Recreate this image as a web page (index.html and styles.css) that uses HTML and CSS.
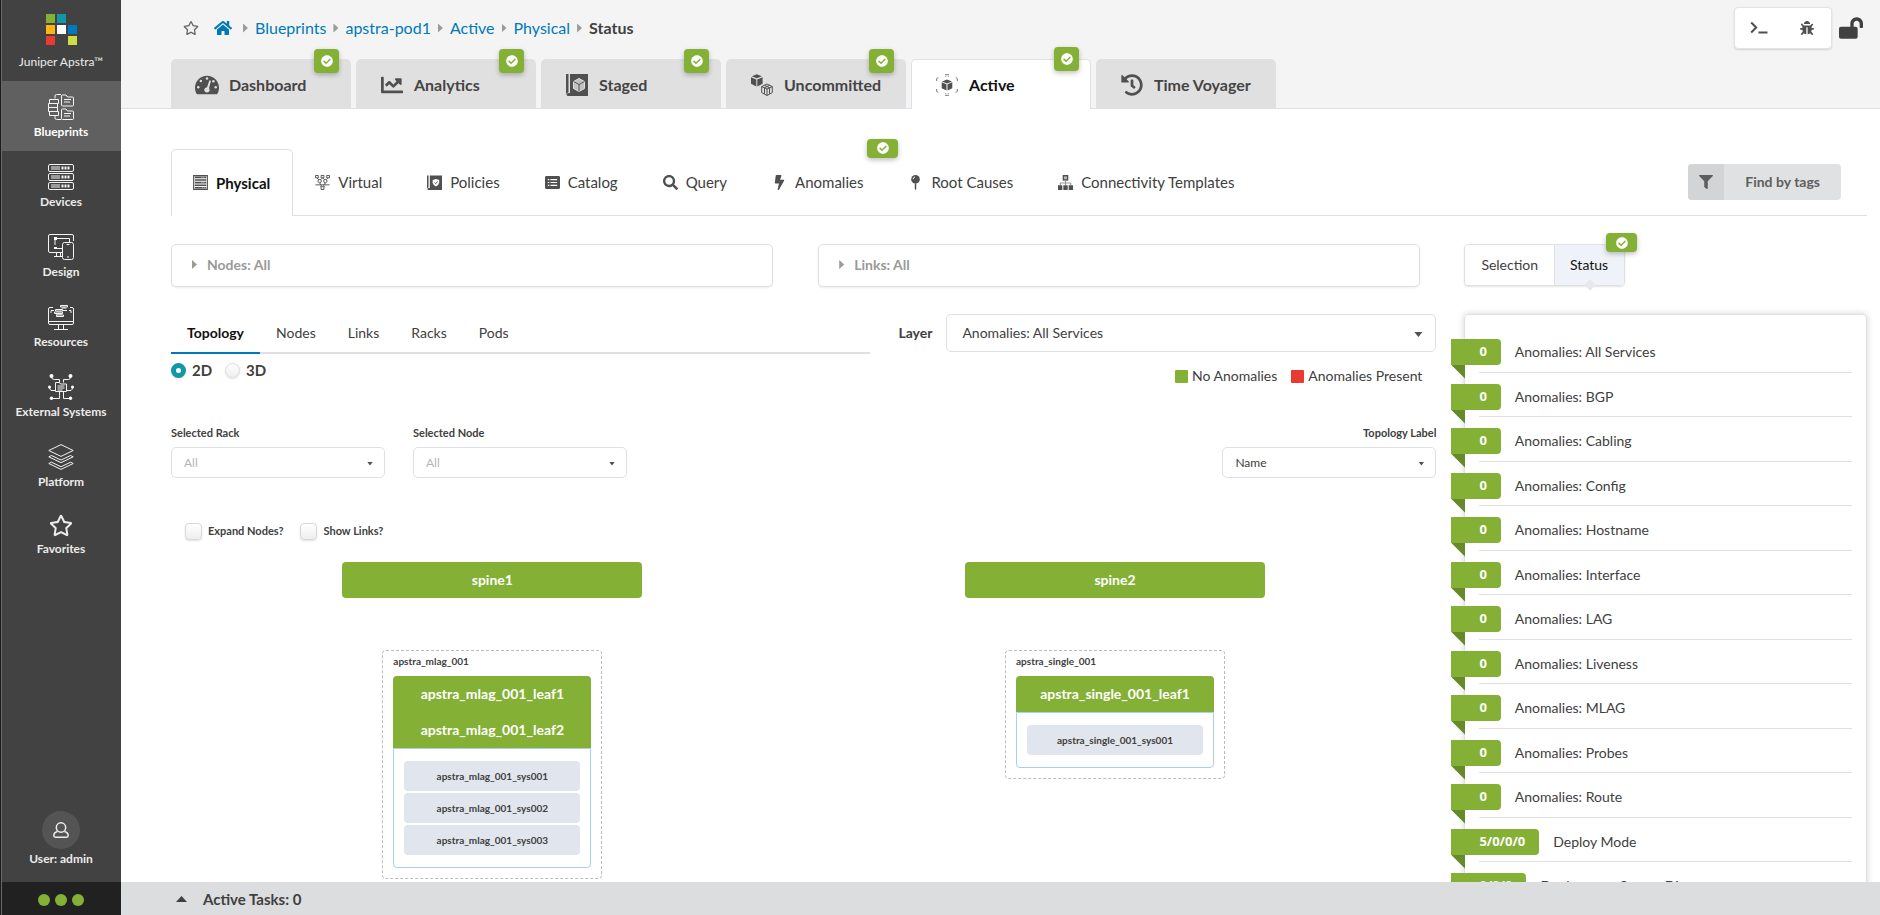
FILE: index.html
```html
<!DOCTYPE html>
<html lang="en">
<head>
<meta charset="utf-8">
<title>apstra-pod1 - Juniper Apstra</title>
<link rel="stylesheet" href="styles.css">
</head>
<body>
<svg class="sprite" aria-hidden="true">
  <symbol id="check" viewBox="0 0 512 512"><path d="M504 256c0 136.967-111.033 248-248 248S8 392.967 8 256 119.033 8 256 8s248 111.033 248 248zM227.314 387.314l184-184c6.248-6.248 6.248-16.379 0-22.627l-22.627-22.627c-6.248-6.248-16.379-6.249-22.628 0L216 308.118l-70.059-70.059c-6.248-6.248-16.379-6.248-22.628 0l-22.627 22.627c-6.248 6.248-6.248 16.379 0 22.627l104 104c6.249 6.249 16.379 6.249 22.628.001z"/></symbol>
  <symbol id="star" viewBox="0 0 576 512"><path d="M528.1 171.5L382 150.2 316.7 17.8c-11.7-23.6-45.6-23.9-57.4 0L194 150.2 47.9 171.5c-26.2 3.8-36.7 36.1-17.7 54.6l105.7 103-25 145.5c-4.5 26.3 23.2 46 46.4 33.7L288 439.6l130.7 68.7c23.2 12.2 50.9-7.4 46.4-33.7l-25-145.5 105.7-103c19-18.5 8.5-50.8-17.7-54.6zM388.6 312.3l23.7 138.4L288 385.4l-124.3 65.3 23.7-138.4-100.6-98 139-20.2 62.2-126 62.2 126 139 20.2-100.6 98z"/></symbol>
</svg>
<div class="app">
  <aside class="sidebar">
    <a class="brand" href="#">
      <svg class="logo" viewBox="0 0 31 31" aria-hidden="true"><path fill="#84b135" d="M0 0h9v9H0z"/><path fill="#1197a5" d="M11 0h9v9h-9z"/><path fill="#fdb515" d="M0 11h9v9H0z"/><path fill="#fff" d="M11 11h9v9h-9z"/><path fill="#0079c1" d="M22 11h9v9h-9z"/><path fill="#e73c2f" d="M0 22h9v9H0z"/><path fill="#cfdd45" d="M22 22h9v9h-9z"/></svg>
      <span>Juniper Apstra™</span>
    </a>
    <nav class="side-nav">
      <a class="side-item is-active" href="#">
        <svg class="side-icon" viewBox="0 0 26 26"><path d="M7 4.500V2q0-1.500 1.500-1.500H13M7 21.500V24q0 1.500 1.500 1.500H13M13.500 11V2q0-1 1-1H18l1.500 2H24.500q1 0 1 1v7q0 1-1 1h-10q-1 0-1-1zM13.500 24.500V16q0-1 1-1H18l1.500 2H24.500q1 0 1 1v6.500q0 1-1 1h-10q-1 0-1-1zM1.500 5.500h9v4h-9zM.5 9.500h9v4h-9zM.5 13.500h9v4h-9zM1.500 17.500h9v4h-9zM16 5.500h7M16 8h6M16 19.500h7M16 22h6"/></svg>
        <span>Blueprints</span></a>
      <a class="side-item" href="#">
        <svg class="side-icon" viewBox="0 0 26 26"><path d="M2 .5h22q1.500 0 1.500 1.500v4q0 1.500-1.500 1.500H2Q.5 7.500.5 6V2Q.5.5 2 .5zM2 9.500h22q1.500 0 1.500 1.500v4q0 1.500-1.500 1.500H2Q.5 16.500.5 15v-4Q.5 9.500 2 9.500zM2 18.500h22q1.500 0 1.500 1.500v4q0 1.500-1.500 1.500H2Q.5 25.500.5 24v-4q0-1.500 1.500-1.500zM3 3h9M3 5h9M3 12h9M3 14h9M3 21h9M3 23h9"/><path stroke-dasharray="2 1" d="M13.500 4h9M13.500 13h9M13.500 22h9" stroke-width="3"/></svg>
        <span>Devices</span></a>
      <a class="side-item" href="#">
        <svg class="side-icon" viewBox="0 0 26 26"><path d="M14 18.500H2Q.5 18.500.5 17V2Q.5.5 2 .5h22q1.500 0 1.500 1.500v5M8.500 18.500V22M12.500 18.500V22M6 22.500h8M7 4v7M9 4.500h12.500V8M6 14.500h8"/><path d="M6 3h3v3H6zM6 13h3v2H6z" fill="#fff" stroke="none"/><rect x="14.500" y="8.500" width="11" height="17" rx="2"/><path d="M18.500 10.500h3M19 23h2"/></svg>
        <span>Design</span></a>
      <a class="side-item" href="#">
        <svg class="side-icon" viewBox="0 0 26 26"><path d="M5 3.500H2Q.5 3.500.5 5v14q0 1.500 1.500 1.500h22q1.500 0 1.500-1.500V5q0-1.500-1.500-1.500h-2M1 17.500h24M10.500 21v4M15.500 21v4M6 25.500h14M3 9V6.500h3M23 9V6.500h-2"/><path d="M7.500 5.500h7v1.500h-7zM6.500 8h8v1.500h-8zM8.500 11h7v1.500h-7zM12.500 1.500h7v1.500h-7zM13.500 4h5M15 6.500h4M8 10h6"/></svg>
        <span>Resources</span></a>
      <a class="side-item" href="#">
        <svg class="side-icon" viewBox="0 0 26 26"><path d="M7.500 17.500v-9h4l1 1.500h6v7.500zM9.500 12h7M9.500 14h7M9.500 16h5M11.500 8.500V5.500h-5Q3.500 5.500 3.500 3M15.500 8.500V5.500h5q2 0 2-2.500M7 16.500H3Q1.500 15 1.500 13.500M19 16.500h4q1.500-1 1.500-3M11.500 18v3.500h-0v3H4.500M15.500 18v6.500h6"/><g fill="#fff" stroke="none"><circle cx="3.500" cy="2" r="2"/><circle cx="22.500" cy="2" r="2"/><circle cx="1.500" cy="13" r="1.500"/><circle cx="24.500" cy="13" r="1.500"/><circle cx="3.500" cy="24.300" r="1.700"/><circle cx="22.500" cy="24.300" r="1.700"/></g></svg>
        <span>External Systems</span></a>
      <a class="side-item" href="#">
        <svg class="side-icon" viewBox="0 0 26 26"><path d="M.8 6.500L13 .6l12.200 5.900L13 12.400zM3.500 11.500L.8 12.800 13 18.700l12.200-5.900-2.700-1.300-9.500 4.600zM3.500 18.200L.8 19.500 13 25.400l12.200-5.900-2.700-1.300-9.500 4.600z"/></svg>
        <span>Platform</span></a>
      <a class="side-item" href="#">
        <svg class="side-star"><use href="#star"/></svg>
        <span>Favorites</span></a>
    </nav>
    <a class="user" href="#">
      <span class="avatar"><svg class="avatar-icon" viewBox="0 0 16 16"><circle cx="8" cy="5.500" r="4.700"/><path d="M4.500 9.500Q.8 10.500.8 13.500q0 1.700 1.700 1.700h11q1.700 0 1.700-1.700 0-3-3.700-4"/></svg></span>
      <span>User: admin</span>
    </a>
    <div class="health"><i></i><i></i><i></i></div>
  </aside>

  <main class="main">
    <header class="header">
      <div class="crumb-row">
        <nav class="crumbs" aria-label="Breadcrumb">
          <button class="icon-button fav" aria-label="Add to favorites"><svg class="crumb-star"><use href="#star"/></svg></button>
          <a href="#" aria-label="Home"><svg class="home" viewBox="0 0 576 512"><path d="M280.37 148.26L96 300.11V464a16 16 0 0 0 16 16l112.060-.29a16 16 0 0 0 15.920-16V368a16 16 0 0 1 16-16h64a16 16 0 0 1 16 16v95.640a16 16 0 0 0 16 16.050L464 480a16 16 0 0 0 16-16V300L295.67 148.26a12.190 12.190 0 0 0-15.300 0zM571.600 251.470L488 182.560V44.050a12 12 0 0 0-12-12h-56a12 12 0 0 0-12 12v72.610L318.470 43a48 48 0 0 0-61 0L4.340 251.470a12 12 0 0 0-1.600 16.900l25.500 31A12 12 0 0 0 45.150 301l235.220-193.740a12.190 12.190 0 0 1 15.300 0L530.900 301a12 12 0 0 0 16.900-1.600l25.500-31a12 12 0 0 0-1.700-16.930z"/></svg></a>
          <i class="caret-right"></i><a href="#">Blueprints</a>
          <i class="caret-right"></i><a href="#">apstra-pod1</a>
          <i class="caret-right"></i><a href="#">Active</a>
          <i class="caret-right"></i><a href="#">Physical</a>
          <i class="caret-right"></i><strong>Status</strong>
        </nav>
        <div class="tools">
          <div class="tool-group">
            <button class="icon-button tool" aria-label="Terminal"><svg class="term" viewBox="0 0 18 14"><path d="M1.200 1.500L6.200 6.500l-5 5M8.500 11.500h9" fill="none" stroke="currentColor" stroke-width="2"/></svg></button>
            <button class="icon-button tool" aria-label="Report a bug"><svg class="bug" viewBox="0 0 512 512"><path d="M511.988 288.900c-.478 17.430-15.217 31.100-32.653 31.100H424v16c0 21.864-4.882 42.584-13.600 61.145l60.228 60.228c12.496 12.497 12.496 32.758 0 45.255-12.498 12.497-32.759 12.496-45.256 0l-54.736-54.736C345.886 467.965 314.351 480 280 480V236c0-6.627-5.373-12-12-12h-24c-6.627 0-12 5.373-12 12v244c-34.351 0-65.886-12.035-90.636-32.108l-54.736 54.736c-12.498 12.497-32.759 12.496-45.256 0-12.496-12.497-12.496-32.758 0-45.255l60.228-60.228C92.882 378.584 88 357.864 88 336v-16H32.666C15.230 320 .491 306.330.013 288.900-.484 270.816 14.028 256 32 256h56v-58.745l-46.628-46.628c-12.496-12.497-12.496-32.758 0-45.255 12.498-12.497 32.758-12.497 45.256 0L141.255 160h229.489l54.627-54.627c12.498-12.497 32.758-12.497 45.256 0 12.496 12.497 12.496 32.758 0 45.255L424 197.255V256h56c17.972 0 32.484 14.816 31.988 32.900zM257 0c-61.856 0-112 50.144-112 112h224C369 50.144 318.856 0 257 0z"/></svg></button>
          </div>
          <button class="icon-button" aria-label="Blueprint unlocked"><svg class="lock" viewBox="0 0 576 512"><path d="M423.500 0C339.500.3 272 69.500 272 153.500V224H48c-26.500 0-48 21.500-48 48v192c0 26.500 21.500 48 48 48h352c26.500 0 48-21.500 48-48V272c0-26.500-21.500-48-48-48h-48v-71.100c0-39.600 31.700-72.500 71.300-72.900 40-.4 72.700 32.100 72.700 72v80c0 13.300 10.700 24 24 24h32c13.300 0 24-10.700 24-24v-80C576 68 507.500-.3 423.500 0z"/></svg></button>
        </div>
      </div>
      <nav class="tabs">
        <a class="tab" href="#"><svg class="tab-icon" viewBox="0 0 576 512"><path d="M288 32C128.940 32 0 160.940 0 320c0 52.800 14.250 102.260 39.060 144.800 5.610 9.620 16.300 15.200 27.440 15.200h443c11.140 0 21.830-5.580 27.440-15.200C561.750 422.260 576 372.800 576 320c0-159.060-128.940-288-288-288z"/><g fill="#e0e0e0"><circle cx="288" cy="100" r="30"/><circle cx="140" cy="160" r="30"/><circle cx="78" cy="310" r="30"/><circle cx="498" cy="310" r="30"/><circle cx="440" cy="165" r="30"/><path d="M345 140l38 12-46 180q14 20 14 40-2 66-64 66t-64-66q2-58 66-64z"/></g></svg>Dashboard<span class="badge"><svg class="badge-icon"><use href="#check"/></svg></span></a>
        <a class="tab" href="#"><svg class="tab-icon small" viewBox="0 0 512 512"><path d="M496 384H64V80c0-8.840-7.160-16-16-16H16C7.160 64 0 71.160 0 80v336c0 17.670 14.330 32 32 32h464c8.840 0 16-7.160 16-16v-32c0-8.840-7.160-16-16-16zM464 96H345.940c-21.380 0-32.090 25.850-16.970 40.970l32.400 32.400L288 242.750l-73.370-73.370c-12.500-12.500-32.760-12.500-45.250 0l-68.690 68.690c-6.250 6.250-6.250 16.380 0 22.630l22.620 22.620c6.250 6.250 16.380 6.250 22.630 0L192 237.250l73.370 73.370c12.500 12.500 32.760 12.500 45.250 0l96-96 32.400 32.400c15.120 15.120 40.970 4.410 40.970-16.970V112c.01-8.840-7.150-16-15.990-16z"/></svg>Analytics<span class="badge"><svg class="badge-icon"><use href="#check"/></svg></span></a>
        <a class="tab" href="#"><svg class="tab-icon small" viewBox="0 0 22 22"><path d="M0 0h2.500v18.500Q1 18.500 0 20zM4 0h18v22H2.500Q.5 22 .5 20.500T2.500 19H4z"/><g fill="none" stroke="#e0e0e0"><path d="M7.500 7.500L13 4.500l5.500 3v7L13 17.500l-5.500-3z" fill="#fff" fill-opacity=".65"/><path d="M7.500 7.500l5.500 3 5.500-3M13 10.500v7" stroke="#555"/></g></svg>Staged<span class="badge"><svg class="badge-icon"><use href="#check"/></svg></span></a>
        <a class="tab" href="#"><svg class="tab-icon small" viewBox="0 0 22 22"><path d="M5.800.2l5 2-5 2-5-2zM0 3.200l5.300 2.200v7L0 9.800zM11.600 3.200L6.300 5.400v7l5.300-2.600z"/><path d="M16 10l5.300 2.600v6L16 21.500l-5.300-2.900v-6zM10.700 12.600L16 15l5.300-2.400M16 15v6.500M13.500 11.300l5 2.500v6M18.500 11.300l-5 2.500v6" fill="none" stroke="currentColor" stroke-width="1"/></svg>Uncommitted<span class="badge"><svg class="badge-icon"><use href="#check"/></svg></span></a>
        <a class="tab is-active" href="#"><svg class="tab-icon small" viewBox="0 0 22 22"><path d="M11 5.500l5 1.900-5 2-5-2zM5.700 8.300l4.800 1.900v6.300l-4.800-2.300zM16.300 8.300l-4.800 1.900v6.300l4.800-2.300z"/><path d="M9 .7h4M9.700 2v.8M12.300 2v.8M.7 7V4.500l1.600-1M21.300 7V4.500l-1.600-1M.7 15v2.500l1.600 1M21.300 15v2.500l-1.600 1M9 21.300h4M9.700 20v-.8M12.300 20v-.8" fill="none" stroke="#777" stroke-width="1"/></svg>Active<span class="badge"><svg class="badge-icon"><use href="#check"/></svg></span></a>
        <a class="tab" href="#"><svg class="tab-icon small" viewBox="0 0 512 512"><path d="M504 255.531c.253 136.640-111.180 248.372-247.820 248.468-59.015.042-113.223-20.530-155.822-54.911-11.077-8.940-11.905-25.541-1.839-35.607l11.267-11.267c8.609-8.609 22.353-9.551 31.891-1.984C173.062 425.135 212.781 440 256 440c101.705 0 184-82.311 184-184 0-101.705-82.311-184-184-184-48.814 0-93.149 18.969-126.068 49.932l50.754 50.754c10.080 10.080 2.941 27.314-11.313 27.314H24c-8.837 0-16-7.163-16-16V38.627c0-14.254 17.234-21.393 27.314-11.314l49.372 49.372C129.209 34.136 189.552 8 256 8c136.810 0 247.747 110.780 248 247.531zm-180.912 78.784l9.823-12.630c8.138-10.463 6.253-25.542-4.210-33.679L288 256.349V152c0-13.255-10.745-24-24-24h-16c-13.255 0-24 10.745-24 24v135.651l65.409 50.874c10.463 8.137 25.541 6.253 33.679-4.210z"/></svg>Time Voyager</a>
      </nav>
    </header>

    <div class="content">
      <div class="subnav">
        <nav class="subtabs">
          <a class="subtab is-active" href="#"><svg class="sub-icon" viewBox="0 0 16 16"><path d="M.7.7h14.600v14.600H.7z" fill="none" stroke="currentColor" stroke-width="1.200"/><path d="M2 2.500h12M2 5.300h12M2 8.100h12M2 10.900h12M2 13.600h12" stroke="currentColor" stroke-width="1.700"/><path d="M9 2.500h4M9 8.100h4M10 13.600h3" stroke="#fff" stroke-width=".7" stroke-dasharray="1 1"/></svg>Physical</a>
          <a class="subtab" href="#"><svg class="sub-icon" viewBox="0 0 16 16"><g fill="none" stroke="currentColor"><path d="M.5 3V.5h3V3zM6.500 3V.5h3V3zM12.500 3V.5h3V3z"/><circle cx="5" cy="6.500" r="1.800"/><circle cx="11" cy="6.500" r="1.800"/><path d="M2 3l2 2M8 3L6 5M8 3l2 2M14 3l-2 2M.5 10.500h15M5 8.500l2 3M11 8.500l-2 3M5.500 12.500h5M6.500 13v2.500h3V13"/></g></svg>Virtual</a>
          <a class="subtab" href="#"><svg class="sub-icon" viewBox="0 0 16 16"><path d="M0 .5h1.600v12.700q-1 0-1.600.8zM3 .5h13v15.500H1.800Q.3 16 .3 15t1.500-1.200H3z"/><path fill="#fff" d="M9.500 4.300l3.500 1v3q-.5 2.700-3.500 4Q6.500 11 6 8.300v-3z"/><path d="M8 8l1.200 1.200L11.500 7" fill="none" stroke="currentColor" stroke-width="1"/></svg>Policies</a>
          <a class="subtab" href="#"><svg class="sub-icon" viewBox="0 0 16 16"><path d="M1.500 1h13q1.500 0 1.500 1.500v11q0 1.500-1.500 1.500h-13Q0 15 0 13.500v-11Q0 1 1.500 1z"/><path stroke="#fff" stroke-width="1.300" d="M3 5h1.600M3 8h1.600M3 11h1.600M5.800 5H13M5.800 8H13M5.800 11H13"/></svg>Catalog</a>
          <a class="subtab" href="#"><svg class="sub-icon" viewBox="0 0 512 512"><path d="M505 442.700L405.300 343c-4.500-4.500-10.600-7-17-7H372c27.600-35.300 44-79.700 44-128C416 93.100 322.900 0 208 0S0 93.100 0 208s93.100 208 208 208c48.300 0 92.700-16.400 128-44v16.300c0 6.400 2.500 12.500 7 17l99.700 99.700c9.400 9.400 24.600 9.400 33.900 0l28.300-28.300c9.400-9.400 9.400-24.600.1-34zM208 336c-70.700 0-128-57.200-128-128 0-70.700 57.200-128 128-128 70.700 0 128 57.200 128 128 0 70.700-57.200 128-128 128z"/></svg>Query</a>
          <a class="subtab" href="#"><svg class="sub-icon" viewBox="0 0 320 512"><path d="M296 160H180.600l42.600-129.800C227.200 15 215.700 0 200 0H56C44 0 33.800 8.900 32.200 20.800l-32 240C-1.700 275.200 9.500 288 24 288h118.700L96.600 482.500c-3.600 15.200 8 29.500 23.300 29.500 8.400 0 16.400-4.400 20.800-12l176-304c9.300-15.900-2.200-36-20.700-36z"/></svg>Anomalies<span class="badge badge-wide"><svg class="badge-icon"><use href="#check"/></svg></span></a>
          <a class="subtab" href="#"><svg class="sub-icon" viewBox="0 0 16 16"><circle cx="8" cy="4.600" r="4.600"/><path d="M7.200 9h1.600v6L8 16l-.8-1z"/><path d="M5.500 4.500Q5.500 2.500 7.500 2" fill="none" stroke="#fff" stroke-width="1"/></svg>Root Causes</a>
          <a class="subtab" href="#"><svg class="sub-icon" viewBox="0 0 16 16"><path d="M5 0h6v6H5z"/><path fill="#bbb" d="M6.500 1.500h3v3h-3z"/><path d="M2.500 11V8.500h11V11M8 6v5" fill="none" stroke="#999" stroke-width="1.200"/><path d="M0 11h4.600v5H0zM5.700 11h4.600v5H5.700zM11.400 11H16v5h-4.600z"/></svg>Connectivity Templates</a>
        </nav>
        <button class="find"><span class="find-icon"><svg class="filter" viewBox="0 0 512 512"><path d="M487.976 0H24.028C2.710 0-8.047 25.866 7.058 40.971L192 225.941V432c0 7.831 3.821 15.170 10.237 19.662l80 55.980C298.020 518.690 320 507.493 320 487.980V225.941l184.947-184.970C520.021 25.896 509.338 0 487.976 0z"/></svg></span><span class="find-text">Find by tags</span></button>
      </div>

      <div class="columns">
        <section class="left">
          <div class="accordions">
            <button class="accordion"><i class="caret-right"></i>Nodes: All</button>
            <button class="accordion"><i class="caret-right"></i>Links: All</button>
          </div>
          <div class="view">
            <div>
              <nav class="view-tabs">
                <a class="view-tab is-active" href="#">Topology</a>
                <a class="view-tab" href="#">Nodes</a>
                <a class="view-tab" href="#">Links</a>
                <a class="view-tab" href="#">Racks</a>
                <a class="view-tab" href="#">Pods</a>
              </nav>
              <div class="radios">
                <label class="radio"><input type="radio" name="dimension" checked>2D</label>
                <label class="radio"><input type="radio" name="dimension">3D</label>
              </div>
            </div>
            <div>
              <div class="layer">
                <label for="layer">Layer</label>
                <span class="dropdown large"><select id="layer"><option>Anomalies: All Services</option></select></span>
              </div>
              <div class="legend">
                <span class="key"><i class="swatch ok"></i>No Anomalies</span>
                <span class="key"><i class="swatch bad"></i>Anomalies Present</span>
              </div>
            </div>
          </div>
          <div class="filters">
            <div class="field"><label for="rack">Selected Rack</label><span class="dropdown muted"><select id="rack"><option>All</option></select></span></div>
            <div class="field"><label for="node">Selected Node</label><span class="dropdown muted"><select id="node"><option>All</option></select></span></div>
            <div class="field field-end"><label for="topo-label">Topology Label</label><span class="dropdown"><select id="topo-label"><option>Name</option></select></span></div>
          </div>
          <div class="checks">
            <label class="check"><input type="checkbox">Expand Nodes?</label>
            <label class="check"><input type="checkbox">Show Links?</label>
          </div>
          <div class="topology">
            <div class="pod">
              <div class="spine">spine1</div>
              <div class="rack">
                <div class="rack-name">apstra_mlag_001</div>
                <div class="leaves"><div class="leaf">apstra_mlag_001_leaf1</div><div class="leaf">apstra_mlag_001_leaf2</div></div>
                <div class="systems"><div class="system">apstra_mlag_001_sys001</div><div class="system">apstra_mlag_001_sys002</div><div class="system">apstra_mlag_001_sys003</div></div>
              </div>
            </div>
            <div class="pod">
              <div class="spine">spine2</div>
              <div class="rack">
                <div class="rack-name">apstra_single_001</div>
                <div class="leaves"><div class="leaf">apstra_single_001_leaf1</div></div>
                <div class="systems"><div class="system">apstra_single_001_sys001</div></div>
              </div>
            </div>
          </div>
        </section>
        <aside class="right">
          <div class="switch">
            <button class="switch-item">Selection</button>
            <button class="switch-item is-active">Status<span class="badge badge-wide"><svg class="badge-icon"><use href="#check"/></svg></span></button>
          </div>
          <div class="panel">
            <a class="status" href="#"><span class="ribbon">0</span>Anomalies: All Services</a>
            <a class="status" href="#"><span class="ribbon">0</span>Anomalies: BGP</a>
            <a class="status" href="#"><span class="ribbon">0</span>Anomalies: Cabling</a>
            <a class="status" href="#"><span class="ribbon">0</span>Anomalies: Config</a>
            <a class="status" href="#"><span class="ribbon">0</span>Anomalies: Hostname</a>
            <a class="status" href="#"><span class="ribbon">0</span>Anomalies: Interface</a>
            <a class="status" href="#"><span class="ribbon">0</span>Anomalies: LAG</a>
            <a class="status" href="#"><span class="ribbon">0</span>Anomalies: Liveness</a>
            <a class="status" href="#"><span class="ribbon">0</span>Anomalies: MLAG</a>
            <a class="status" href="#"><span class="ribbon">0</span>Anomalies: Probes</a>
            <a class="status" href="#"><span class="ribbon">0</span>Anomalies: Route</a>
            <a class="status" href="#"><span class="ribbon">5/0/0/0</span>Deploy Mode</a>
            <a class="status" href="#"><span class="ribbon">0/0/0</span>Deployment Status: Discovery</a>
          </div>
        </aside>
      </div>
    </div>

    <footer class="tasks"><button class="tasks-toggle"><i class="caret-up"></i>Active Tasks: 0</button></footer>
  </main>
</div>
</body>
</html>
```
FILE: styles.css
```css
* { box-sizing: border-box; }
body {
  margin: 0;
  background: #fff;
  color: #404040;
  font: 15px/20px Lato, "Liberation Sans", sans-serif;
}
a { color: inherit; text-decoration: none; }
button, select, input { font: inherit; color: inherit; margin: 0; }
button { border: 0; background: none; padding: 0; cursor: pointer; }
svg { display: block; fill: currentColor; flex: none; }
.sprite { position: absolute; width: 0; height: 0; }

.app { display: flex; height: 100vh; overflow: hidden; }

/* Sidebar */
.sidebar {
  flex: none;
  width: 121px;
  display: flex;
  flex-direction: column;
  background: #424242;
  border-left: 1px solid #1b1b1b;
  box-shadow: inset 1px 0 #6a6a6a;
  color: #ececec;
  font-size: 12px;
  line-height: 16px;
  font-weight: 700;
  text-align: center;
}
.brand {
  display: flex;
  flex-direction: column;
  align-items: center;
  gap: 9px;
  height: 81px;
  padding-top: 14px;
  font-weight: 400;
}
.logo { width: 31px; height: 31px; }
.side-item {
  display: flex;
  flex-direction: column;
  align-items: center;
  gap: 4px;
  height: 70px;
  margin-left: 1px;
  padding: 13px 1px 0 0;
}
.side-item.is-active { background: #606060; color: #fff; }
.side-icon {
  width: 26px;
  height: 26px;
  fill: none;
  stroke: #f4f4f4;
  stroke-width: 1;
}
.side-star { width: 24px; height: 23px; }
.user {
  display: flex;
  flex-direction: column;
  align-items: center;
  gap: 2px;
  margin-top: auto;
  padding-bottom: 15px;
}
.avatar {
  display: grid;
  place-items: center;
  width: 38px;
  height: 38px;
  border-radius: 50%;
  background: #545454;
}
.avatar-icon { width: 16px; height: 16px; fill: none; stroke: #ececec; stroke-width: 1.5; }
.health {
  display: flex;
  align-items: center;
  justify-content: center;
  gap: 5px;
  height: 33px;
  padding: 3px 1px 0 0;
  margin-left: 1px;
  background: #212121;
}
.health i { width: 12px; height: 12px; border-radius: 50%; background: #84b135; }

/* Header */
.main { flex: 1; min-width: 0; display: flex; flex-direction: column; }
.header { flex: none; background: #f4f4f4; border-bottom: 1px solid #dee0e6; padding-left: 50px; }
.crumb-row { display: flex; justify-content: space-between; height: 59px; padding: 0 17px 0 12px; }
.crumbs { display: flex; align-items: center; gap: 7px; height: 56px; font-size: 16px; }
.crumbs a { color: #0079b9; }
.fav { color: #666; }
.crumb-star { width: 16px; height: 14px; }
.home { width: 18px; height: 16px; margin: 0 4px 0 8px; }
.caret-right {
  width: 5px;
  height: 9px;
  background: #9b9b9b;
  clip-path: polygon(0 0, 100% 50%, 0 100%);
}
.tools { display: flex; gap: 7px; align-items: flex-start; padding-top: 7px; }
.tool-group {
  display: flex;
  height: 42px;
  background: #fff;
  border: 1px solid #e0e3e8;
  border-radius: 4px;
  box-shadow: 0 1px 2px rgba(34, 36, 38, .15);
}
.tool { width: 48px; display: grid; place-items: center; color: #505050; }
.term { width: 18px; height: 14px; }
.bug { width: 14px; height: 14px; }
.lock { width: 24px; height: 22px; margin-top: 10px; }

.tabs { display: flex; gap: 5px; }
.tab {
  position: relative;
  display: flex;
  align-items: center;
  gap: 10px;
  width: 180px;
  height: 49px;
  padding: 3px 0 0 24px;
  border-radius: 5px 5px 0 0;
  background: #e0e0e0;
  font-size: 16px;
  font-weight: 700;
  color: #444;
}
.tab.is-active {
  height: 50px;
  margin-bottom: -1px;
  padding: 1px 0 0 23px;
  background: #fff;
  border: 1px solid #dee0e6;
  border-bottom: 0;
  color: #111;
}
.tab-icon { width: 24px; height: 24px; color: #505050; }
.tab-icon.small { width: 22px; height: 22px; margin: 0 1px; }
.badge {
  position: absolute;
  top: -10px;
  right: 12px;
  display: grid;
  place-items: center;
  width: 25px;
  height: 24px;
  border-radius: 4px;
  background: #84b135;
  color: #fff;
  box-shadow: 0 2px 5px rgba(0, 0, 0, .25);
}
.is-active > .badge { top: -13px; right: 11px; }
.badge-icon { width: 12px; height: 12px; }
.badge-wide { width: 31px; height: 19px; }

/* Secondary navigation */
.content { flex: 1; min-height: 0; overflow: hidden; padding: 40px 13px 0 50px; }
.subnav {
  display: flex;
  justify-content: space-between;
  align-items: center;
  height: 67px;
  padding-right: 26px;
  border-bottom: 1px solid #dee0e6;
}
.subtabs { display: flex; height: 67px; }
.subtab {
  position: relative;
  display: flex;
  align-items: center;
  gap: 8px;
  padding: 0 23px 0 22px;
  font-size: 15px;
}
.subtab.is-active {
  padding: 0 22px 0 21px;
  background: #fff;
  border: 1px solid #dee0e6;
  border-bottom: 0;
  border-radius: 5px 5px 0 0;
  font-weight: 700;
  color: #111;
}
.sub-icon { width: 15px; height: 15px; color: #505050; }
.subtab .badge { top: -10px; right: -12px; }
.find {
  display: flex;
  height: 36px;
  border-radius: 4px;
  overflow: hidden;
  background: #e0e1e2;
  color: #5e5e5e;
  font-weight: 700;
  font-size: 14px;
}
.find-icon { display: grid; place-items: center; width: 36px; height: 36px; background: #d3d4d6; }
.filter { width: 14px; height: 14px; }
.find-text { padding: 8px 21px; }

/* Body columns */
.columns { display: grid; grid-template-columns: minmax(0, 22fr) minmax(0, 7fr); gap: 28px; padding-top: 28px; }
.accordions { display: grid; grid-template-columns: 1fr 1fr; gap: 45px; padding-right: 16px; }
.accordion {
  display: flex;
  align-items: center;
  gap: 10px;
  height: 43px;
  padding: 0 20px 2px;
  border: 1px solid #dee0e6;
  border-radius: 5px;
  background: #fff;
  color: #999;
  font-size: 14px;
  font-weight: 700;
  box-shadow: 0 1px 2px rgba(34, 36, 38, .08);
}
.view { display: grid; grid-template-columns: 13fr 10fr; gap: 28px; margin-top: 27px; }
.view-tabs { display: flex; height: 40px; border-bottom: 2px solid #dee0e6; font-size: 14px; }
.view-tab { padding: 9px 16px; }
.view-tab.is-active { height: 40px; border-bottom: 2px solid #0079b9; color: #111; font-weight: 700; }
.radios { display: flex; gap: 13px; margin-top: 6px; font-weight: 700; }
.radio { display: flex; align-items: center; gap: 6px; }
.radio input {
  appearance: none;
  width: 15px;
  height: 15px;
  border: 1px solid #dcdcdc;
  border-radius: 50%;
  background: linear-gradient(#fff, #eee);
  box-shadow: 0 1px 2px rgba(0, 0, 0, .12);
}
.radio input:checked { border: 5px solid #1197a5; background: #fff; }
.layer { display: flex; align-items: center; gap: 14px; font-size: 14px; font-weight: 700; }
.layer .dropdown { flex: 1; font-weight: 400; }
.dropdown { position: relative; display: block; }
.dropdown::after {
  content: "";
  position: absolute;
  right: 12px;
  top: calc(50% - 1px);
  width: 6px;
  height: 4px;
  background: #505050;
  clip-path: polygon(0 0, 100% 0, 50% 100%);
  pointer-events: none;
}
.dropdown select {
  display: block;
  appearance: none;
  width: 100%;
  height: 31px;
  padding: 0 12px;
  border: 1px solid #dee0e6;
  border-radius: 5px;
  background: #fff;
  font-size: 12px;
}
.dropdown.large select { height: 38px; padding: 0 15px; font-size: 14px; }
.dropdown.large::after { right: 14px; width: 8px; height: 5px; }
.dropdown.muted select { color: #b5b5b5; }
.legend { display: flex; justify-content: flex-end; gap: 14px; margin-top: 14px; padding-right: 14px; font-size: 14px; }
.key { display: flex; align-items: center; gap: 4px; }
.swatch { width: 13px; height: 13px; border-radius: 1px; }
.swatch.ok { background: #84b135; }
.swatch.bad { background: #e73c2f; }

.filters { display: flex; gap: 28px; margin-top: 39px; }
.field { width: 214px; font-size: 12px; line-height: 16px; }
.field label { display: block; margin-bottom: 6px; font-size: 11px; font-weight: 700; }
.field-end { margin-left: auto; }
.field-end label { text-align: right; }
.checks { display: flex; gap: 17px; margin: 43px 0 0 14px; font-size: 11px; font-weight: 700; }
.check { display: flex; align-items: center; gap: 6px; }
.check input {
  appearance: none;
  width: 17px;
  height: 17px;
  border: 1px solid #d8d8d8;
  border-radius: 4px;
  background: linear-gradient(#fff, #eee);
  box-shadow: 0 1px 2px rgba(0, 0, 0, .12);
}

/* Topology */
.topology { display: grid; grid-template-columns: 1fr 1fr; padding: 21px 10px 0; }
.pod { display: flex; flex-direction: column; align-items: center; gap: 52px; }
.spine {
  width: 300px;
  padding: 8px;
  border-radius: 4px;
  background: #84b135;
  color: #fff;
  font-size: 14px;
  font-weight: 700;
  text-align: center;
}
.rack { width: 220px; padding: 2px 10px 10px; border: 1px dashed #bbb; border-radius: 4px; }
.rack-name { padding-bottom: 7px; font-size: 10px; line-height: 16px; font-weight: 700; }
.leaves { overflow: hidden; border-radius: 4px 4px 0 0; background: #84b135; }
.leaf { padding: 8px 0; color: #fff; font-size: 14px; font-weight: 700; text-align: center; }
.systems {
  display: grid;
  gap: 2px;
  padding: 12px 10px;
  border: 1px solid #a8d0ee;
  border-radius: 0 0 4px 4px;
}
.system {
  padding: 5px 0;
  border-radius: 4px;
  background: #e1e5ed;
  font-size: 10px;
  font-weight: 700;
  text-align: center;
}

/* Status panel */
.switch {
  display: flex;
  width: max-content;
  border: 1px solid #dee0e6;
  border-radius: 4px;
  box-shadow: 0 1px 2px rgba(34, 36, 38, .12);
}
.switch-item { position: relative; height: 40px; padding: 0 16px; font-size: 14px; background: #fff; border-radius: 4px; }
.switch-item.is-active { padding-left: 15px; border-left: 1px solid #dee0e6; border-radius: 0 3px 3px 0; background: #eff3f9; color: #111; }
.switch-item.is-active::after {
  content: "";
  position: absolute;
  left: calc(50% - 4px);
  bottom: -4px;
  width: 8px;
  height: 8px;
  background: #e6e8eb;
  transform: rotate(45deg);
}
.switch .badge { top: -12px; right: -13px; }
.panel {
  margin-top: 28px;
  padding: 13px 14px;
  border: 1px solid #dee0e6;
  border-radius: 4px;
  box-shadow: 0 0 6px rgba(34, 36, 38, .2);
}
.status {
  display: flex;
  gap: 14px;
  padding: 11px 0 7px;
  border-bottom: 1px solid #dee0e6;
  font-size: 14px;
  line-height: 25px;
}
.status:nth-child(even) { padding-bottom: 6px; }
.ribbon {
  position: relative;
  height: 26px;
  margin-left: -28px;
  padding: 0 14px 0 28px;
  border-radius: 0 4px 4px 0;
  background: #84b135;
  color: #fff;
  font-family: "Open Sans", "Noto Sans", sans-serif;
  font-size: 13px;
  font-weight: 700;
}
.ribbon::after {
  content: "";
  position: absolute;
  left: 0;
  top: 100%;
  width: 14px;
  height: 14px;
  background: #668a29;
  clip-path: polygon(0 0, 100% 0, 100% 100%);
}

.tasks { position: relative; flex: none; height: 33px; padding-left: 55px; background: #dcddde; }
.tasks-toggle { display: flex; align-items: center; gap: 16px; height: 34px; font-weight: 700; }
.caret-up { width: 11px; height: 6px; background: #404040; clip-path: polygon(50% 0, 100% 100%, 0 100%); }
```
